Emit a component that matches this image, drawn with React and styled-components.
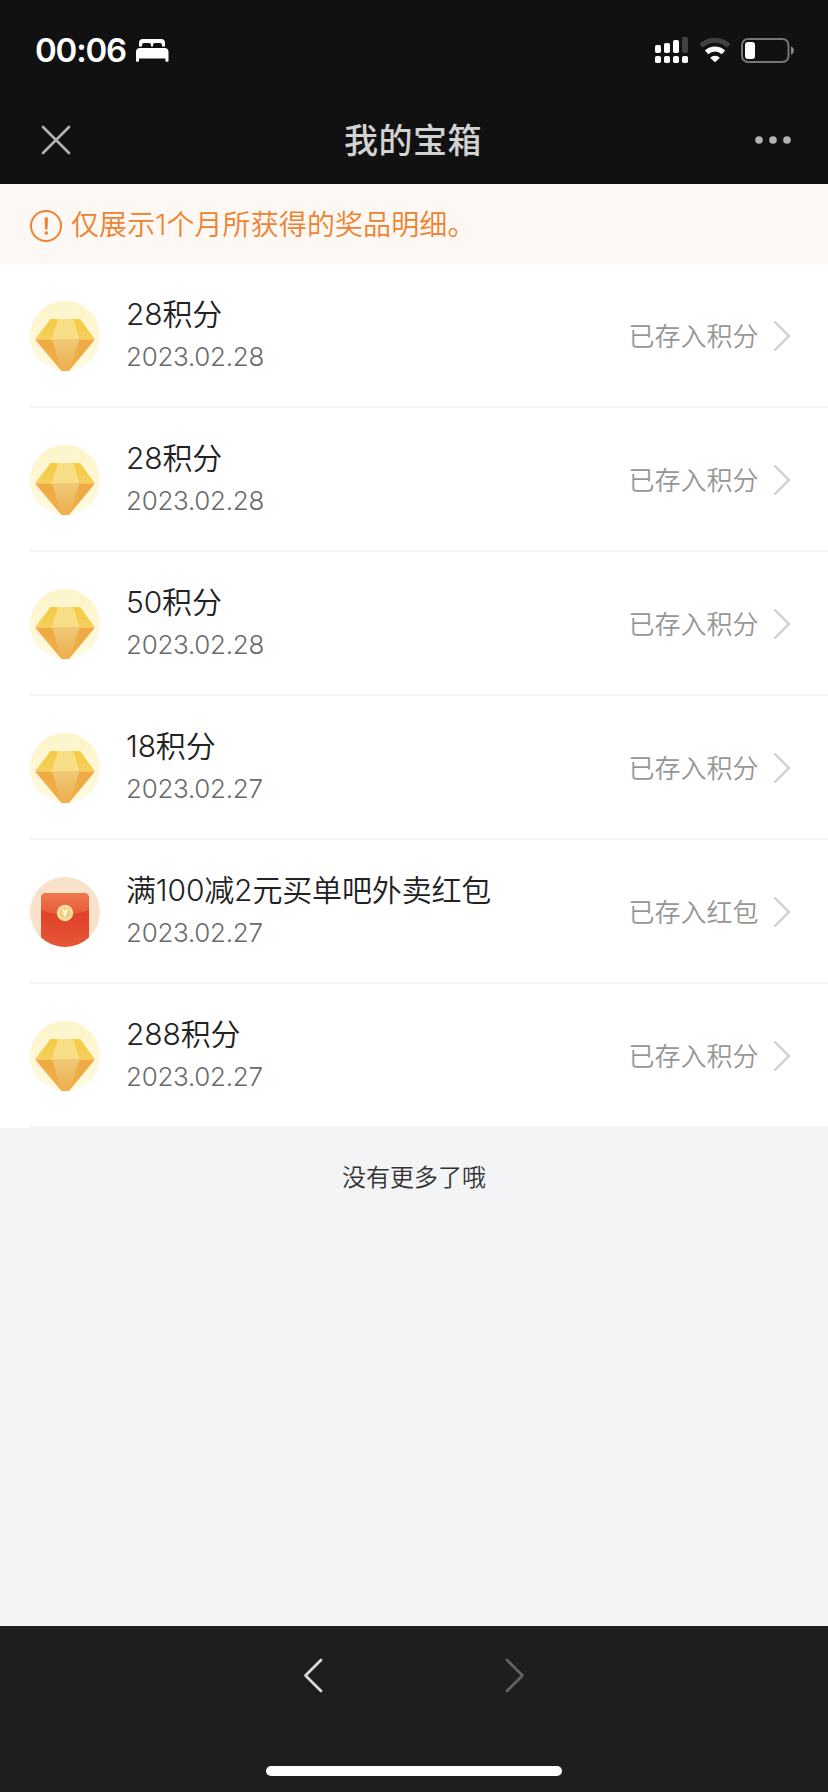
import styled, { createGlobalStyle } from "styled-components";

const prizes = [
  { id: 1, type: "points", name: "28积分", date: "2023.02.28", status: "已存入积分" },
  { id: 2, type: "points", name: "28积分", date: "2023.02.28", status: "已存入积分" },
  { id: 3, type: "points", name: "50积分", date: "2023.02.28", status: "已存入积分" },
  { id: 4, type: "points", name: "18积分", date: "2023.02.27", status: "已存入积分" },
  { id: 5, type: "coupon", name: "满100减2元买单吧外卖红包", date: "2023.02.27", status: "已存入红包" },
  { id: 6, type: "points", name: "288积分", date: "2023.02.27", status: "已存入积分" },
];

const BedIcon = () => (
  <svg width="33" height="23" viewBox="0 0 33 23" fill="#fff">
    <path d="M3 7.500V4a4 4 0 0 1 4-4h18a4 4 0 0 1 4 4v3.500h-3V6a2 2 0 0 0-2-2h-5a2 2 0 0 0-2 2v1.500h-2V6a2 2 0 0 0-2-2H8a2 2 0 0 0-2 2v1.500z" />
    <path d="M0 13a4 4 0 0 1 4-4h24.500a4 4 0 0 1 4 4v9a.8.8 0 0 1-.8.8h-1.500a.8.8 0 0 1-.8-.8v-2.500H3V22a.8.8 0 0 1-.8.8H.8A.8.8 0 0 1 0 22z" />
  </svg>
);

const SignalIcon = () => (
  <svg width="33" height="26" viewBox="0 0 33 26" fill="#fff">
    <rect x="0" y="8" width="6" height="8" rx="1.800" />
    <rect x="9" y="6" width="6" height="10" rx="1.800" />
    <rect x="18" y="3" width="6" height="13" rx="1.800" />
    <rect x="27" y="0" width="6" height="16" rx="1.800" fill="#414141" />
    <rect x="0" y="19" width="6" height="7" rx="1.800" />
    <rect x="9" y="19" width="6" height="7" rx="1.800" />
    <rect x="18" y="19" width="6" height="7" rx="1.800" />
    <rect x="27" y="19" width="6" height="7" rx="1.800" />
  </svg>
);

const WifiIcon = () => (
  <svg width="32" height="25" viewBox="0 0 32 25">
    <path d="M2.200 7.800a20 20 0 0 1 27.600 0" fill="none" stroke="#414141" strokeWidth="5" />
    <path d="M7.600 14.400a12.300 12.300 0 0 1 16.800 0" fill="none" stroke="#fff" strokeWidth="5" />
    <path d="M16 24.300l-4.900-4.600a7 7 0 0 1 9.800 0z" fill="#fff" />
  </svg>
);

const BatteryIcon = () => (
  <svg width="54" height="25" viewBox="0 0 54 25">
    <rect x="1" y="1" width="46.500" height="23" rx="6" fill="none" stroke="#767676" strokeWidth="2" />
    <rect x="4" y="4" width="10" height="17" rx="3" fill="#fff" />
    <path d="M50 8.500c4 1.200 4 7 0 8.200z" fill="#868686" />
  </svg>
);

const CloseIcon = () => (
  <svg width="30" height="30" viewBox="0 0 30 30" fill="none" stroke="#b4b4b4" strokeWidth="2.600" strokeLinecap="round">
    <path d="M2 2l26 26M28 2L2 28" />
  </svg>
);

const MoreIcon = () => (
  <svg width="36" height="8" viewBox="0 0 36 8" fill="#b4b4b4">
    <circle cx="4" cy="4" r="3.800" />
    <circle cx="18" cy="4" r="3.800" />
    <circle cx="32" cy="4" r="3.800" />
  </svg>
);

const NoticeIcon = () => (
  <svg width="32" height="32" viewBox="0 0 32 32">
    <circle cx="16" cy="16" r="15" fill="none" stroke="#f0812f" strokeWidth="2" />
    <path d="M14.600 7.500h3.400l-.5 12h-2.400z" fill="#f0812f" />
    <rect x="14.700" y="21.500" width="3.200" height="3" fill="#f0812f" />
  </svg>
);

const DiamondIcon = () => (
  <svg width="70" height="70" viewBox="0 0 70 70">
    <defs>
      <linearGradient id="gemTop" x1="0" y1="0" x2="0" y2="1">
        <stop offset="0" stopColor="#f5cb42" />
        <stop offset="1" stopColor="#f4cf5c" />
      </linearGradient>
      <linearGradient id="gemBottom" x1="0" y1="0" x2="0" y2="1">
        <stop offset="0" stopColor="#eeab45" />
        <stop offset="1" stopColor="#f0ae42" />
      </linearGradient>
      <linearGradient id="gemCore" x1="0" y1="0" x2="0" y2="1">
        <stop offset="0" stopColor="#efc879" />
        <stop offset="1" stopColor="#eeae4e" />
      </linearGradient>
      <linearGradient id="gemHalo" x1="0" y1="0" x2="0" y2="1">
        <stop offset="0" stopColor="#fdf4c8" />
        <stop offset="1" stopColor="#fefae2" />
      </linearGradient>
    </defs>
    <circle cx="35" cy="35" r="35" fill="url(#gemHalo)" />
    <path d="M20.500 18H50l15 20.500H5z" fill="url(#gemTop)" />
    <path d="M28 18h15.500l6 20.500h-27.500z" fill="#f7df87" />
    <path d="M5 38.500h60L39 70h-7.500z" fill="url(#gemBottom)" />
    <path d="M22 38.500h27.500L39 70h-7.500z" fill="url(#gemCore)" />
  </svg>
);

const RedPacketIcon = () => (
  <svg width="70" height="70" viewBox="0 0 70 70">
    <defs>
      <clipPath id="packetClip">
        <circle cx="35" cy="35" r="35" />
      </clipPath>
      <linearGradient id="packetBody" x1="0" y1="0" x2="0" y2="1">
        <stop offset="0.300" stopColor="#e04128" />
        <stop offset="1" stopColor="#e75a3a" />
      </linearGradient>
      <linearGradient id="packetFlap" x1="0" y1="0" x2="0" y2="1">
        <stop offset="0" stopColor="#ee794d" />
        <stop offset="1" stopColor="#e65b3b" />
      </linearGradient>
    </defs>
    <g clipPath="url(#packetClip)">
      <rect width="70" height="70" fill="#f9e2cc" />
      <rect x="11" y="16" width="48" height="60" rx="5" fill="url(#packetBody)" />
      <path d="M11 33V21a5 5 0 0 1 5-5h38a5 5 0 0 1 5 5v12q-24 9-48 0z" fill="url(#packetFlap)" />
    </g>
    <circle cx="35" cy="36" r="8.200" fill="#f9e2a0" />
    <circle cx="35" cy="36" r="5.400" fill="#f3cb78" />
    <path d="M32.500 32.500l2.500 3.300 2.500-3.300M35 35.800v4.200M32.800 36.500h4.400" fill="none" stroke="#fffaf0" strokeWidth="1.500" />
  </svg>
);

const ArrowIcon = () => (
  <svg width="18" height="32" viewBox="0 0 18 32" fill="none" stroke="#cbcbcb" strokeWidth="2">
    <path d="M1.500 1.500L16 16 1.500 30.500" />
  </svg>
);

const NavIcon = ({ d, color }) => (
  <svg width="20" height="35" viewBox="0 0 20 35" fill="none" stroke={color} strokeWidth="2.800" strokeLinecap="round" strokeLinejoin="round">
    <path d={d} />
  </svg>
);

const App = () => {
  return (
    <>
      <GlobalStyle />
      <Screen>
        <Header>
          <StatusBar>
            <Clock>00:06</Clock>
            <BedIcon />
            <StatusIcons>
              <SignalIcon />
              <WifiIcon />
              <BatteryIcon />
            </StatusIcons>
          </StatusBar>
          <TitleBar>
            <IconButton aria-label="关闭">
              <CloseIcon />
            </IconButton>
            <Title>我的宝箱</Title>
            <IconButton aria-label="更多">
              <MoreIcon />
            </IconButton>
          </TitleBar>
        </Header>
        <Notice>
          <NoticeIcon />
          <span>仅展示1个月所获得的奖品明细。</span>
        </Notice>
        <PrizeList>
          {prizes.map((prize) => (
            <PrizeRow key={prize.id}>
              {prize.type === "coupon" ? <RedPacketIcon /> : <DiamondIcon />}
              <PrizeInfo>
                <PrizeName>{prize.name}</PrizeName>
                <PrizeDate>{prize.date}</PrizeDate>
              </PrizeInfo>
              <PrizeStatus>{prize.status}</PrizeStatus>
              <ArrowIcon />
            </PrizeRow>
          ))}
        </PrizeList>
        <ListEnd>没有更多了哦</ListEnd>
        <BottomBar>
          <NavButtons>
            <IconButton aria-label="后退">
              <NavIcon d="M18 2L2.500 17.500 18 33" color="#dadada" />
            </IconButton>
            <IconButton aria-label="前进">
              <NavIcon d="M2 2l15.500 15.500L2 33" color="#626262" />
            </IconButton>
          </NavButtons>
          <HomeIndicator />
        </BottomBar>
      </Screen>
    </>
  );
};

const GlobalStyle = createGlobalStyle`
  * {
    box-sizing: border-box;
  }
  body {
    margin: 0;
    font-family: Inter, "Noto Sans CJK SC", sans-serif;
    font-weight: 350;
  }
  svg {
    display: block;
    flex-shrink: 0;
  }
`;

const Screen = styled.div`
  display: flex;
  flex-direction: column;
  width: 828px;
  height: 1792px;
  background: #f3f4f6;
`;

const Header = styled.header`
  height: 184px;
  background: #111;
`;

const StatusBar = styled.div`
  display: flex;
  align-items: center;
  height: 100px;
  padding: 0 33px 0 35px;
`;

const Clock = styled.span`
  width: 101px;
  font-size: 33px;
  font-weight: 600;
  line-height: 40px;
  letter-spacing: -1.2px;
  color: #fff;
`;

const StatusIcons = styled.div`
  display: flex;
  align-items: center;
  gap: 10.5px;
  margin-left: auto;
`;

const TitleBar = styled.div`
  display: flex;
  align-items: center;
  justify-content: space-between;
  height: 80px;
  padding: 0 37px 0 41px;
`;

const IconButton = styled.button`
  padding: 0;
  border: none;
  background: none;
`;

const Title = styled.h1`
  margin: 0;
  padding-top: 1px;
  font-size: 34px;
  font-weight: 500;
  line-height: 48px;
  letter-spacing: 0.5px;
  color: #d2d2d2;
`;

const Notice = styled.div`
  display: flex;
  align-items: center;
  gap: 9px;
  height: 80px;
  padding: 3px 30px 0;
  background: #fdf8f4;
  color: #f0812f;
  font-size: 28px;
  line-height: 40px;
  letter-spacing: 0.1px;

  span {
    padding-bottom: 2px;
  }
`;

const PrizeList = styled.ul`
  margin: 0;
  padding: 0 0 0 30px;
  list-style: none;
  background: #fff;
`;

const PrizeRow = styled.li`
  display: flex;
  align-items: center;
  height: 144px;
  padding: 2px 37px 0 0;
  border-bottom: 2px solid #f3f3f4;
`;

const PrizeInfo = styled.div`
  flex: 1;
  padding: 0 0 2px 26px;
`;

const PrizeName = styled.div`
  font-size: 30px;
  line-height: 44px;
  letter-spacing: -0.15px;
  color: #222;
`;

const PrizeDate = styled.div`
  font-size: 26px;
  line-height: 42px;
  letter-spacing: -0.3px;
  color: #6a6a6a;
`;

const PrizeStatus = styled.div`
  margin-right: 14.5px;
  padding-top: 1px;
  font-size: 26px;
  line-height: 40px;
  color: #969696;
`;

const ListEnd = styled.p`
  flex: 1;
  margin: 0;
  padding-top: 32px;
  font-size: 24px;
  line-height: 36px;
  text-align: center;
  color: #333;
`;

const BottomBar = styled.footer`
  display: flex;
  flex-direction: column;
  align-items: center;
  justify-content: space-between;
  height: 166px;
  padding: 32px 0 16px;
  background: #1e1e1e;
`;

const NavButtons = styled.div`
  display: flex;
  justify-content: space-between;
  width: 222px;
`;

const HomeIndicator = styled.div`
  width: 296px;
  height: 10px;
  border-radius: 5px;
  background: #fff;
`;

export default App;
